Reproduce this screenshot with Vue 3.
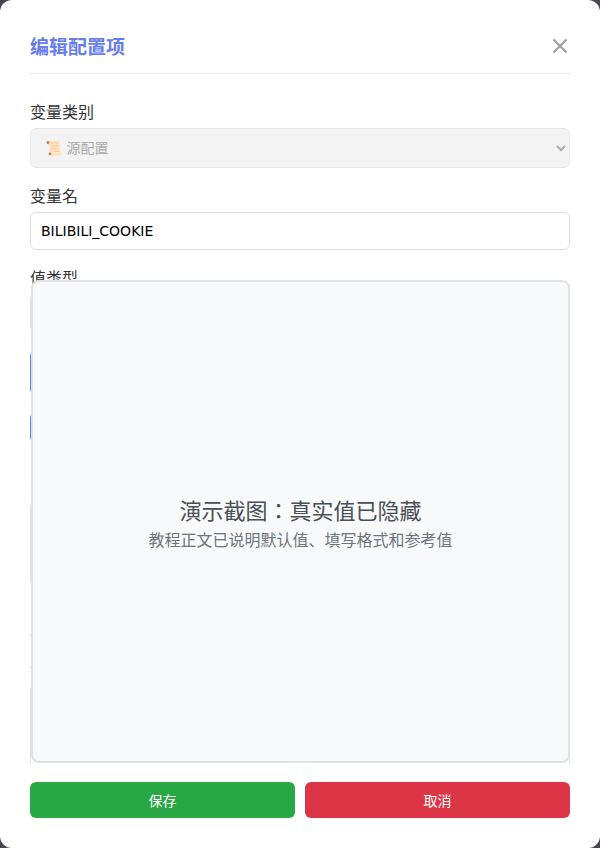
<template>
  <div class="backdrop">
    <div class="modal">
      <div class="modal-header">
        <h3 class="modal-title">编辑配置项</h3>
        <button class="close-btn" title="关闭">
          <svg width="16" height="16" viewBox="0 0 16 16">
            <path d="M1.5 1.5 14.5 14.5M14.5 1.5 1.5 14.5" fill="none" stroke="#999" stroke-width="1.8" />
          </svg>
        </button>
      </div>

      <div class="modal-body">
        <div class="form-group">
          <label>变量类别</label>
          <select class="form-control select-disabled" disabled>
            <option>📜 源配置</option>
          </select>
        </div>
        <div class="form-group">
          <label>变量名</label>
          <input class="form-control text-input" type="text" value="BILIBILI_COOKIE" />
        </div>
        <div class="form-group">
          <label>值类型</label>
          <select class="form-control text-input">
            <option>字符串</option>
          </select>
        </div>
        <div class="type-hint primary-block"></div>
        <div class="type-hint secondary-block"></div>
        <div class="form-group value-group">
          <label>变量值</label>
          <textarea class="form-control value-area"></textarea>
        </div>
        <p class="helper">说明</p>
        <div class="form-group">
          <label>备注</label>
          <textarea class="form-control note-area"></textarea>
        </div>

        <!-- Cover over the real values -->
        <div class="demo-mask">
          <div class="mask-title">演示截图：真实值已隐藏</div>
          <div class="mask-sub">教程正文已说明默认值、填写格式和参考值</div>
        </div>
      </div>

      <div class="modal-footer">
        <button class="btn btn-save">保存</button>
        <button class="btn btn-cancel">取消</button>
      </div>
    </div>
  </div>
</template>

<script setup>
</script>

<style>
html, body {
  margin: 0;
  background: #4b4350;
}
</style>

<style scoped>
.backdrop {
  width: 600px;
  height: 848px;
  overflow: hidden;
  font-family: "DejaVu Sans", "Noto Sans CJK JP", sans-serif;
}

.modal {
  box-sizing: border-box;
  height: 848px;
  padding: 30px;
  background: #fff;
  border-radius: 12px;
  display: flex;
  flex-direction: column;
}

.modal-header {
  display: flex;
  justify-content: space-between;
  align-items: center;
  height: 31px;
  padding-bottom: 12px;
  border-bottom: 1px solid #e9ecef;
}

.modal-title {
  margin: 0;
  font-size: 19px;
  font-weight: 700;
  color: #667eea;
}

.close-btn {
  border: none;
  background: none;
  padding: 0;
  width: 20px;
  height: 20px;
  display: flex;
  align-items: center;
  justify-content: center;
}

.modal-body {
  position: relative;
  flex: 1;
  min-height: 0;
  overflow: hidden;
  padding-top: 27px;
}

.form-group {
  margin-bottom: 17px;
}

label {
  display: block;
  font-size: 16px;
  line-height: 24px;
  color: #333;
  margin-bottom: 3px;
}

.form-control {
  display: block;
  box-sizing: border-box;
  width: 100%;
  border: 1px solid #dcdfe3;
  border-radius: 6px;
  font-family: inherit;
  font-size: 14px;
  color: #000;
  background: #fff;
  padding: 0 10px;
}

.select-disabled {
  height: 40px;
  background: #eee;
  border-color: #ddd;
  color: #888;
}

.text-input {
  height: 38px;
}

.type-hint {
  border: 1px solid #667eea;
  border-radius: 6px;
  box-sizing: border-box;
}

.primary-block {
  height: 45px;
  margin-top: 18px;
}

.secondary-block {
  height: 31px;
  margin-top: 17px;
}

.value-group {
  margin-top: 32px;
}

.value-area {
  height: 84px;
  resize: none;
}

.helper {
  margin: 43px 0 10px;
  font-size: 12px;
  line-height: 18px;
  color: #666;
}

.note-area {
  height: 120px;
  resize: none;
}

.demo-mask {
  position: absolute;
  left: 1px;
  right: 0;
  top: 206px;
  height: 483px;
  box-sizing: border-box;
  border: 2px solid #dee2e6;
  border-radius: 8px;
  background: #f8f9fa;
  display: flex;
  flex-direction: column;
  align-items: center;
  justify-content: center;
  gap: 1px;
  padding-top: 6px;
  text-align: center;
}

.mask-title {
  font-size: 22px;
  line-height: 32px;
  color: #495057;
}

.mask-sub {
  font-size: 16px;
  line-height: 24px;
  color: #6c757d;
}

.modal-footer {
  display: flex;
  gap: 10px;
  margin-top: 18px;
}

.btn {
  flex: 1;
  height: 36px;
  border: none;
  border-radius: 6px;
  color: #fff;
  font-family: inherit;
  font-size: 14px;
}

.btn-save {
  background: #28a745;
}

.btn-cancel {
  background: #dc3545;
}
</style>
